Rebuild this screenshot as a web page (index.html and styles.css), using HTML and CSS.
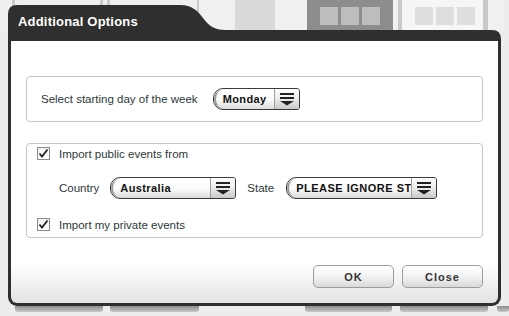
FILE: index.html
```html
<!DOCTYPE html>
<html lang="en">
<head>
  <meta charset="UTF-8" />
  <title>Additional Options</title>
  <link rel="stylesheet" href="styles.css">
</head>
<body>

  <div class="backdrop">
    <div class="strip-top">
      <span class="bd" style="width:12px"></span>
      <span class="bd line" style="width:3px"></span>
      <span class="bd" style="width:85px"></span>
      <span class="bd line" style="width:3px"></span>
      <span class="bd" style="width:4px"></span>
      <span class="bd line" style="width:3px"></span>
      <span class="bd" style="width:87px"></span>
      <span class="bd line" style="width:2px"></span>
      <span class="bd light" style="width:36px"></span>
      <span class="bd mid" style="width:40px"></span>
      <span class="bd light" style="width:32px"></span>
      <span class="bd dark">
        <i></i><i></i><i></i>
      </span>
      <span class="bd light" style="width:5px"></span>
      <span class="bd line" style="width:4px"></span>
      <span class="bd pale">
        <i></i><i></i><i></i>
      </span>
      <span class="bd line" style="width:5px"></span>
      <span class="bd light" style="width:16px"></span>
    </div>
    <div class="strip-bottom">
      <span class="slot" style="width:15px"></span>
      <span class="bar" style="width:88px"></span>
      <span class="slot" style="width:7px"></span>
      <span class="bar" style="width:89px"></span>
      <span class="slot" style="width:106px"></span>
      <span class="bar" style="width:87px"></span>
      <span class="slot" style="width:8px"></span>
      <span class="bar" style="width:88px"></span>
      <span class="slot" style="width:9px"></span>
      <span class="bar" style="width:12px"></span>
    </div>
  </div>

  <div class="dialog">
    <div class="dialog-head">
      <svg class="tab" width="493" height="36" viewBox="0 0 493 36">
        <path d="M0 36 L0 9 Q0 0 9 0 L172 0 C184 0 190 6 195 13 C201 21 206 25 218 25 L484 25 Q493 25 493 34 L493 36 Z" fill="#2f2f2f"/>
      </svg>
      <h1>Additional Options</h1>
    </div>

    <div class="dialog-body">
      <div class="group group-day">
        <span class="label">Select starting day of the week</span>
        <div class="select sel-day">
          <span class="sel-text">Monday</span>
          <span class="sel-btn">
            <svg width="16" height="14" viewBox="0 0 16 14"><rect x="1" y="1" width="14" height="2" fill="#222"/><rect x="1" y="5" width="14" height="2" fill="#222"/><path d="M1 9 H15 L8 13.5 Z" fill="#222"/></svg>
          </span>
        </div>
      </div>

      <div class="group group-events">
        <div class="check-row">
          <span class="checkbox">
            <svg width="11" height="11" viewBox="0 0 11 11"><path d="M1.5 5.5 L4 8.5 L9.5 1.5" stroke="#222" stroke-width="1.8" fill="none"/></svg>
          </span>
          <span class="label">Import public events from</span>
        </div>

        <div class="country-row">
          <span class="label">Country</span>
          <div class="select sel-country">
            <span class="sel-text">Australia</span>
            <span class="sel-btn">
              <svg width="16" height="14" viewBox="0 0 16 14"><rect x="1" y="1" width="14" height="2" fill="#222"/><rect x="1" y="5" width="14" height="2" fill="#222"/><path d="M1 9 H15 L8 13.5 Z" fill="#222"/></svg>
            </span>
          </div>
          <span class="label state-label">State</span>
          <div class="select sel-state">
            <span class="sel-text caps">PLEASE IGNORE STATE</span>
            <span class="sel-btn">
              <svg width="16" height="14" viewBox="0 0 16 14"><rect x="1" y="1" width="14" height="2" fill="#222"/><rect x="1" y="5" width="14" height="2" fill="#222"/><path d="M1 9 H15 L8 13.5 Z" fill="#222"/></svg>
            </span>
          </div>
        </div>

        <div class="check-row last">
          <span class="checkbox">
            <svg width="11" height="11" viewBox="0 0 11 11"><path d="M1.5 5.5 L4 8.5 L9.5 1.5" stroke="#222" stroke-width="1.8" fill="none"/></svg>
          </span>
          <span class="label">Import my private events</span>
        </div>
      </div>

      <div class="actions">
        <button>OK</button>
        <button>Close</button>
      </div>
    </div>
  </div>

</body>
</html>
```

FILE: styles.css
```css
body {
  margin: 0;
  width: 509px;
  height: 316px;
  overflow: hidden;
  position: relative;
  background: #ededed;
  font-family: 'Liberation Sans', Arial, sans-serif;
}

/* calendar behind the dialog */
.backdrop {
  height: 316px;
  display: flex;
  flex-direction: column;
  justify-content: space-between;
}

.strip-top {
  display: flex;
  height: 30px;
}

.bd {
  display: flex;
  gap: 3px;
  background: #efefef;
}

.bd.line { background: #c9c9c9; }
.bd.light { background: #f1f1f1; }
.bd.mid { background: #dadada; }

.bd.dark {
  width: 86px;
  padding: 7px 0 0 13px;
  box-sizing: border-box;
  background: #8d8d8d;
}

.bd.pale {
  width: 81px;
  padding: 7px 0 0 13px;
  box-sizing: border-box;
  background: #f6f6f6;
}

.bd i {
  display: block;
  width: 18px;
  height: 18px;
  background: #bdbdbd;
}

.bd.pale i { background: #dedede; }

.strip-bottom {
  display: flex;
  height: 10px;
}

.bar {
  height: 6px;
  background: linear-gradient(#8c8c8c, #c8c8c8);
  border-radius: 0 0 3px 3px;
}

/* dialog */
.dialog {
  position: absolute;
  left: 8px;
  top: 5px;
  width: 493px;
  height: 301px;
  display: flex;
  flex-direction: column;
}

.dialog-head {
  position: relative;
  height: 36px;
}

.dialog-head .tab {
  position: absolute;
  left: 0;
  top: 0;
}

.dialog-head h1 {
  position: relative;
  margin: 0;
  padding: 9px 0 0 10px;
  font-size: 13px;
  font-weight: bold;
  letter-spacing: 0.2px;
  color: #fff;
}

.dialog-body {
  flex: 1;
  border: 3px solid #2f2f2f;
  border-top: 0;
  border-radius: 0 0 9px 9px;
  padding: 35px 15px 0;
  background: linear-gradient(#fff 0, #fff 222px, #e3e3e3 100%);
}

.label {
  font-size: 11.5px;
  color: #2c3838;
}

.group {
  border: 1px solid #c6c6c6;
  border-radius: 4px;
  background: #fff;
}

.group-day {
  height: 44px;
  display: flex;
  align-items: center;
  padding-left: 14px;
  gap: 15px;
}

.group-events {
  margin-top: 21px;
  height: 93px;
  padding-left: 10px;
}

.check-row {
  display: flex;
  align-items: center;
  gap: 9px;
  height: 19px;
}

.check-row.last {
  margin-top: 16px;
}

.checkbox {
  width: 11px;
  height: 11px;
  border: 1px solid #8a8a8a;
  background: linear-gradient(#f4f4f4, #fff);
  display: flex;
}

.country-row {
  display: flex;
  align-items: center;
  margin: 14px 0 0 22px;
  height: 22px;
}

.select {
  display: flex;
  height: 20px;
  border: 1px solid #3a3a3a;
  border-radius: 10px 3px 3px 10px;
  overflow: hidden;
  box-shadow: inset 0 -1px 0 #bbb;
}

.sel-text {
  flex: 1;
  overflow: hidden;
  white-space: nowrap;
  padding: 0 0 0 7px;
  line-height: 20px;
  font-size: 11px;
  font-weight: bold;
  letter-spacing: 0.4px;
  color: #111;
  background: linear-gradient(#fff, #fafafa 55%, #dcdcdc);
  border-left: 2px solid #9a9a9a;
  border-radius: 10px 0 0 10px;
}

.sel-text.caps { letter-spacing: 0.5px; }

.sel-btn {
  width: 24px;
  display: flex;
  align-items: center;
  justify-content: center;
  border-left: 1px solid #a0a0a0;
  background: linear-gradient(#fff, #ececec 50%, #c9c9c9);
}

.sel-day { width: 85px; }

.sel-country {
  width: 124px;
  margin-left: 11px;
}

.state-label { margin-left: 11px; }

.sel-state {
  width: 149px;
  margin-left: 12px;
}

.actions {
  display: flex;
  justify-content: flex-end;
  gap: 8px;
  margin-top: 27px;
}

button {
  width: 81px;
  height: 23px;
  border: 1px solid #9c9c9c;
  border-radius: 5px;
  background: linear-gradient(#fff, #f3f3f3 50%, #d9d9d9);
  font-family: 'Liberation Sans', Arial, sans-serif;
  font-size: 11px;
  font-weight: bold;
  letter-spacing: 1px;
  color: #333;
  padding: 0;
}
```
